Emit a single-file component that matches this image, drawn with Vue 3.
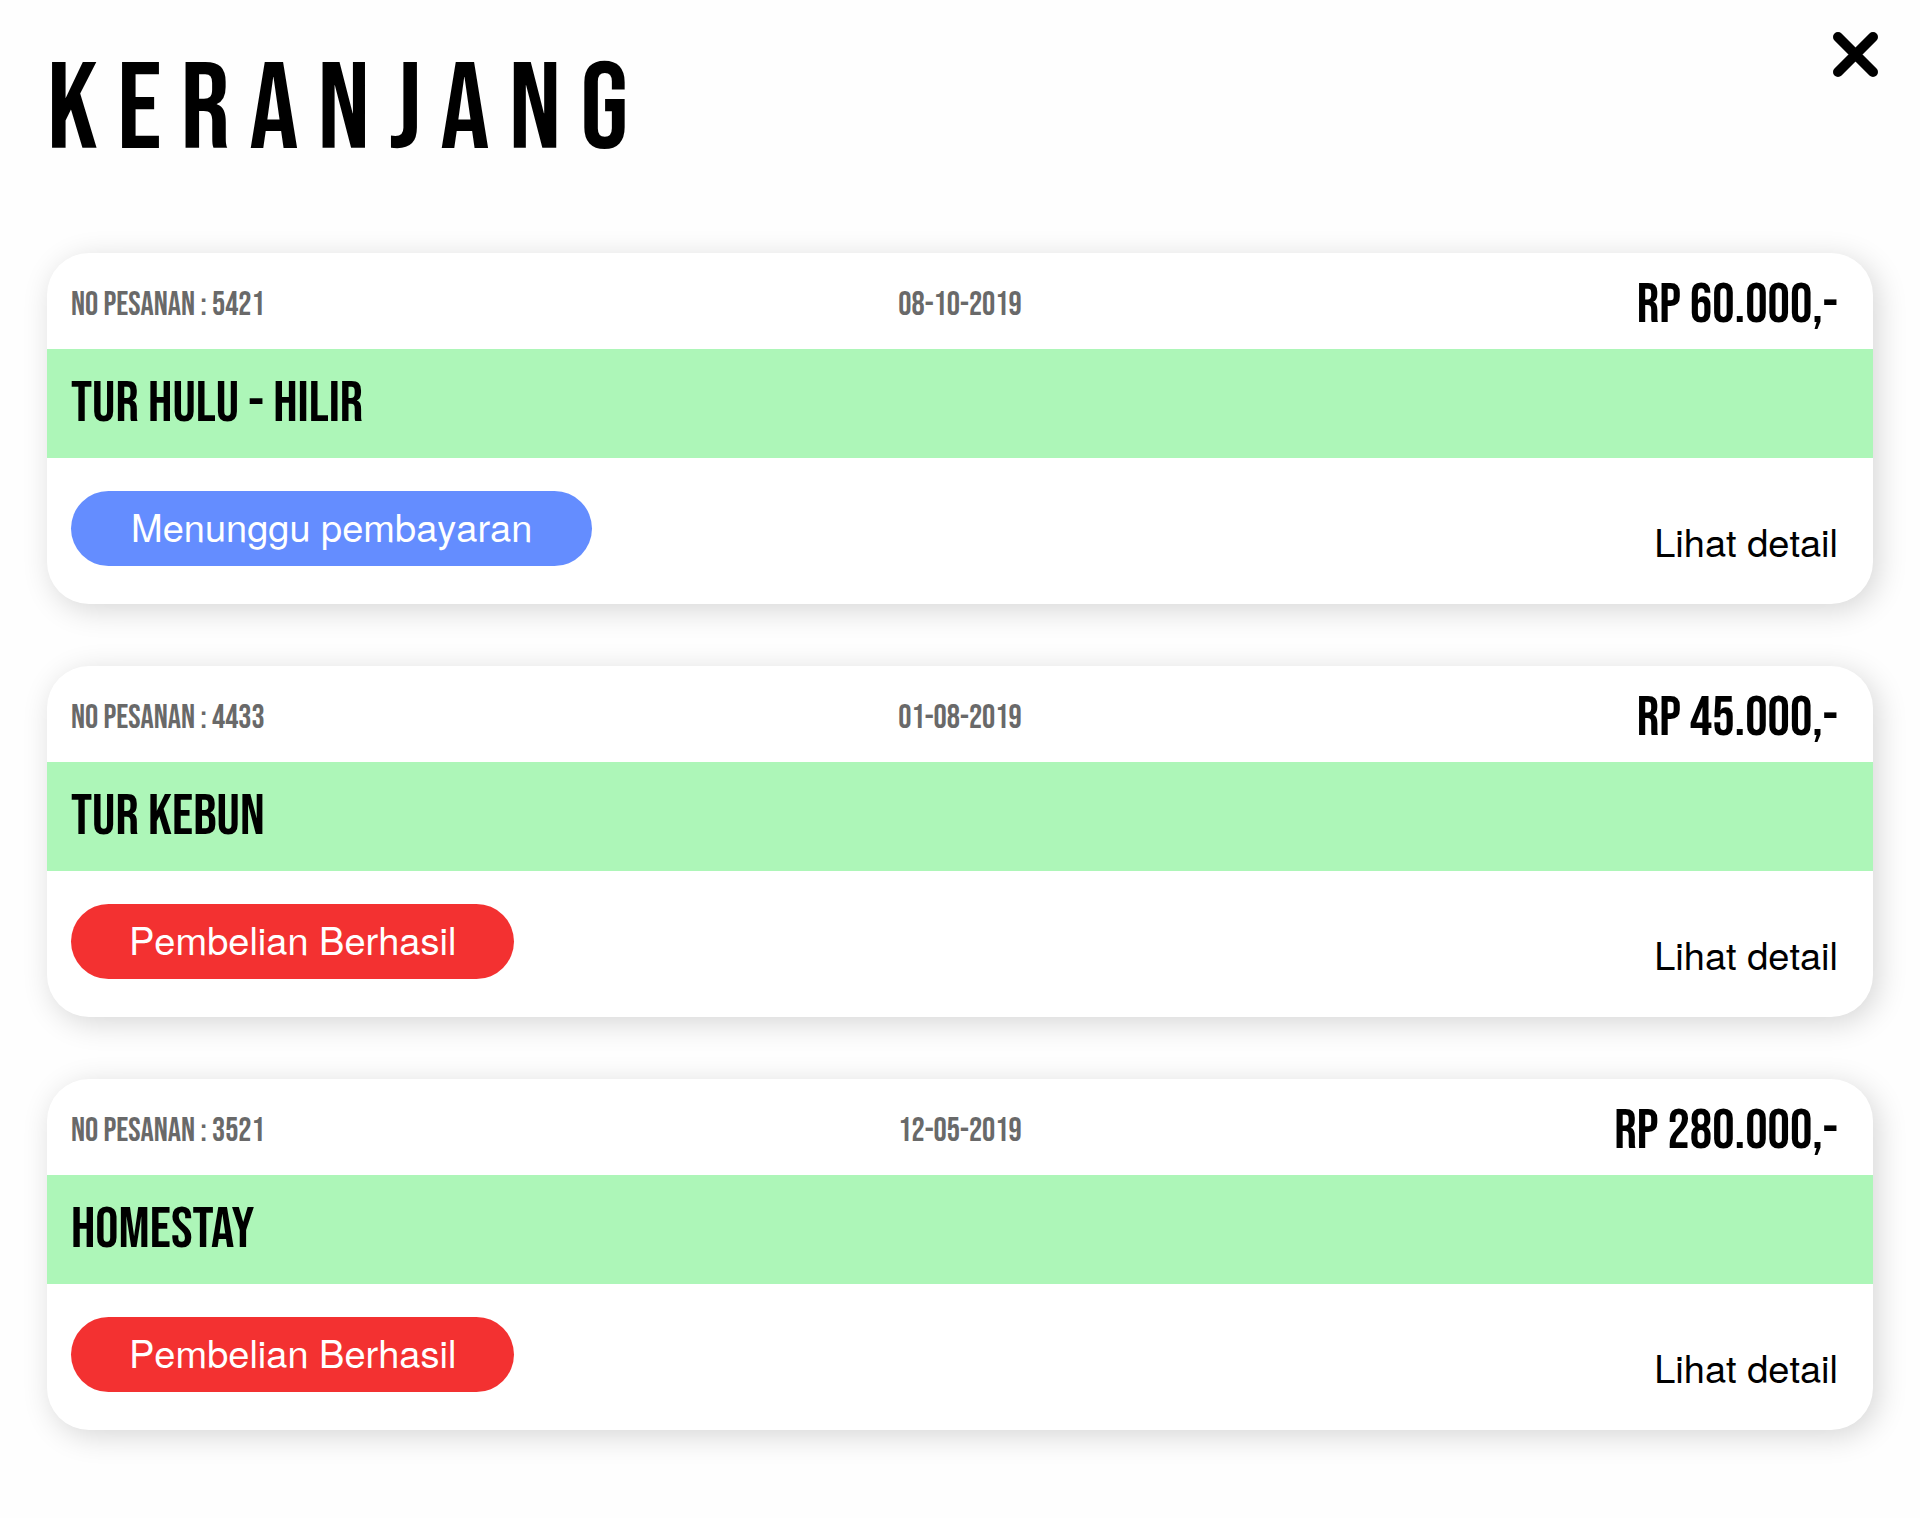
<script setup>
const orders = [
  { id: 5421, date: '08-10-2019', price: 'RP 60.000,-', name: 'TUR HULU - HILIR', status: 'Menunggu pembayaran', kind: 'waiting' },
  { id: 4433, date: '01-08-2019', price: 'RP 45.000,-', name: 'TUR KEBUN', status: 'Pembelian Berhasil', kind: 'done' },
  { id: 3521, date: '12-05-2019', price: 'RP 280.000,-', name: 'HOMESTAY', status: 'Pembelian Berhasil', kind: 'done' },
]
</script>

<template>
  <main class="cart">
    <header class="cart-header">
      <h1>KERANJANG</h1>
      <button class="close" type="button" aria-label="Tutup">
        <svg viewBox="0 0 45 45" aria-hidden="true">
          <path d="M5 5 40 40M40 5 5 40" />
        </svg>
      </button>
    </header>

    <section class="orders">
      <article v-for="order in orders" :key="order.id" class="order">
        <div class="order-top">
          <span class="meta">NO PESANAN : {{ order.id }}</span>
          <time class="meta">{{ order.date }}</time>
          <strong class="price">{{ order.price }}</strong>
        </div>
        <h2>{{ order.name }}</h2>
        <div class="order-bottom">
          <button type="button" class="status" :class="order.kind">{{ order.status }}</button>
          <a href="#" class="detail">Lihat detail</a>
        </div>
      </article>
    </section>
  </main>
</template>

<style>
body {
  margin: 0;
  background: #fefefe;
}
</style>

<style scoped>
.cart {
  box-sizing: border-box;
  padding: 32px 47px 88px;
  color: #000;
  font-family: "Bebas Neue", "Liberation Sans Narrow", "Liberation Sans", sans-serif;
}
.cart-header {
  display: flex;
  justify-content: space-between;
  align-items: flex-start;
}
h1 {
  margin: 0;
  padding: 5px 0 68px;
  font-size: 123px;
  line-height: 148px;
  font-weight: 400;
  letter-spacing: 19px;
}
.close {
  width: 45px;
  height: 45px;
  margin-right: -5px;
  padding: 0;
  border: 0;
  background: none;
  cursor: pointer;
}
.close svg {
  display: block;
  width: 45px;
  height: 45px;
  fill: none;
  stroke: #000;
  stroke-width: 10;
  stroke-linecap: round;
}
.orders {
  display: flex;
  flex-direction: column;
  gap: 62px;
}
.order {
  overflow: hidden;
  border-radius: 42px;
  background: #fff;
  box-shadow: 5px 6px 30px rgba(0, 0, 0, 0.16);
}
.order-top {
  display: grid;
  grid-template-columns: 1fr auto 1fr;
  align-items: center;
  height: 88px;
  padding: 8px 24px 0;
}
.meta {
  color: #696969;
  font-size: 33px;
  line-height: 40px;
  font-weight: 400;
}
.price {
  justify-self: end;
  padding: 2px 11px 0 0;
  font-size: 56px;
  line-height: 66px;
  font-weight: 400;
}
h2 {
  margin: 0;
  padding: 0 24px;
  background: #adf6b8;
  font-size: 58px;
  line-height: 109px;
  font-weight: 400;
}
.order-bottom {
  display: flex;
  justify-content: space-between;
  align-items: flex-start;
  padding: 33px 35px 38px 24px;
}
.status,
.detail {
  font-family: "TeX Gyre Heros", "Nimbus Sans L", Helvetica, "Liberation Sans", Arial, sans-serif;
  font-size: 38px;
  font-kerning: none;
}
.status {
  height: 75px;
  padding: 0 60px 6px;
  border: 0;
  border-radius: 38px;
  color: #fff;
  cursor: pointer;
}
.waiting {
  background: #648dff;
}
.done {
  padding: 0 58px 6px;
  background: #f33131;
}
.detail {
  padding-top: 28px;
  color: #000;
  line-height: 44px;
  text-decoration: none;
}
</style>
